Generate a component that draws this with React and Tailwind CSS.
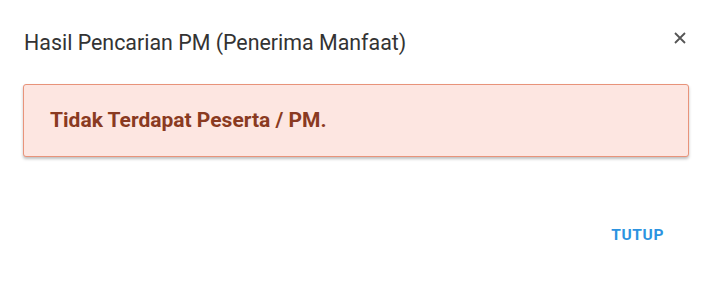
export default function App() {
  return (
    <div
      className="w-[712px] h-[286px] bg-white text-[#333]"
      style={{ fontFamily: "Roboto, 'Liberation Sans', sans-serif" }}
    >
      <div className="flex items-start justify-between pl-6 pr-[26px] pt-[29px]">
        <h2 className="text-[21.4px] leading-[28px] font-normal text-[#333]">
          Hasil Pencarian PM (Penerima Manfaat)
        </h2>
        <button className="text-[#555] mt-[3px]">
          <svg width="12" height="12" viewBox="0 0 12 12" fill="none" stroke="currentColor" strokeWidth={1.8}>
            <path d="M1 1l10 10M11 1L1 11" />
          </svg>
        </button>
      </div>

      <div className="px-[23px] pt-[27px]">
        <div className="rounded-[3px] border border-[#e8937a] bg-[#fde6e1] shadow-[0_2px_3px_rgba(0,0,0,0.25)] h-[73px] flex items-center pl-[26px]">
          <span className="text-[21px] font-bold text-[#8a3a21]">
            Tidak Terdapat Peserta / PM.
          </span>
        </div>
      </div>

      <div className="flex justify-end pr-12 pt-[67px]">
        <button className="text-[15.5px] font-bold tracking-[0.04em] text-[#2c93e0]">
          TUTUP
        </button>
      </div>
    </div>
  );
}
